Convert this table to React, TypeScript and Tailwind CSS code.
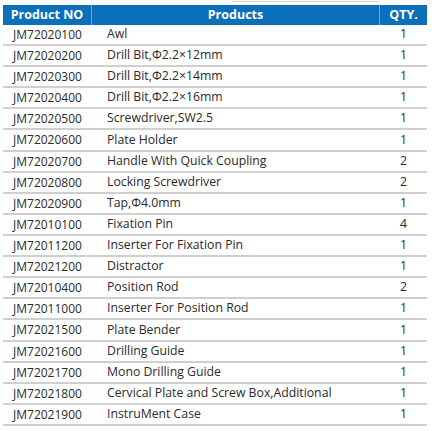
import React from "react";

const rows: [string, string, string][] = [
  ["JM72020100", "Awl", "1"],
  ["JM72020200", "Drill Bit,Φ2.2×12mm", "1"],
  ["JM72020300", "Drill Bit,Φ2.2×14mm", "1"],
  ["JM72020400", "Drill Bit,Φ2.2×16mm", "1"],
  ["JM72020500", "Screwdriver,SW2.5", "1"],
  ["JM72020600", "Plate Holder", "1"],
  ["JM72020700", "Handle With Quick Coupling", "2"],
  ["JM72020800", "Locking Screwdriver", "2"],
  ["JM72020900", "Tap,Φ4.0mm", "1"],
  ["JM72010100", "Fixation Pin", "4"],
  ["JM72011200", "Inserter For Fixation Pin", "1"],
  ["JM72021200", "Distractor", "1"],
  ["JM72010400", "Position Rod", "2"],
  ["JM72011000", "Inserter For Position Rod", "1"],
  ["JM72021500", "Plate Bender", "1"],
  ["JM72021600", "Drilling Guide", "1"],
  ["JM72021700", "Mono Drilling Guide", "1"],
  ["JM72021800", "Cervical Plate and Screw Box,Additional", "1"],
  ["JM72021900", "InstruMent Case", "1"],
];

export default function App() {
  return (
    <div
      className="w-[434px] h-[431px] bg-white text-[#2a2a2a] overflow-hidden"
      style={{ fontFamily: "'Open Sans', sans-serif" }}
    >
      <div className="h-[4px] pl-[232px]">
        <div className="mt-[1px] h-[1px] w-[147px] bg-[#cfcfcf]" />
      </div>
      <div className="ml-[3px] w-[424px]">
        <div className="flex h-[20px] bg-[#0b6fba] text-white font-bold text-[12.5px] leading-[20px]">
          <div className="w-[89px] text-center border-r border-[#6aa6d8]">Product NO</div>
          <div className="w-[288px] text-center border-r border-[#6aa6d8]">Products</div>
          <div className="flex-1 text-center">QTY.</div>
        </div>
        {rows.map((r, i) => (
          <div
            key={r[0]}
            className={
              "flex items-center border-b-2 border-[#cfcfcf] " +
              (i === 5 || i === 14 ? "h-[22px]" : "h-[21px]")
            }
          >
            <div className="w-[89px] pl-[10px] text-[12px]">{r[0]}</div>
            <div className="w-[288px] pl-[15px] text-[12.25px]">{r[1]}</div>
            <div className="flex-1 text-center text-[12.25px]">{r[2]}</div>
          </div>
        ))}
      </div>
    </div>
  );
}
